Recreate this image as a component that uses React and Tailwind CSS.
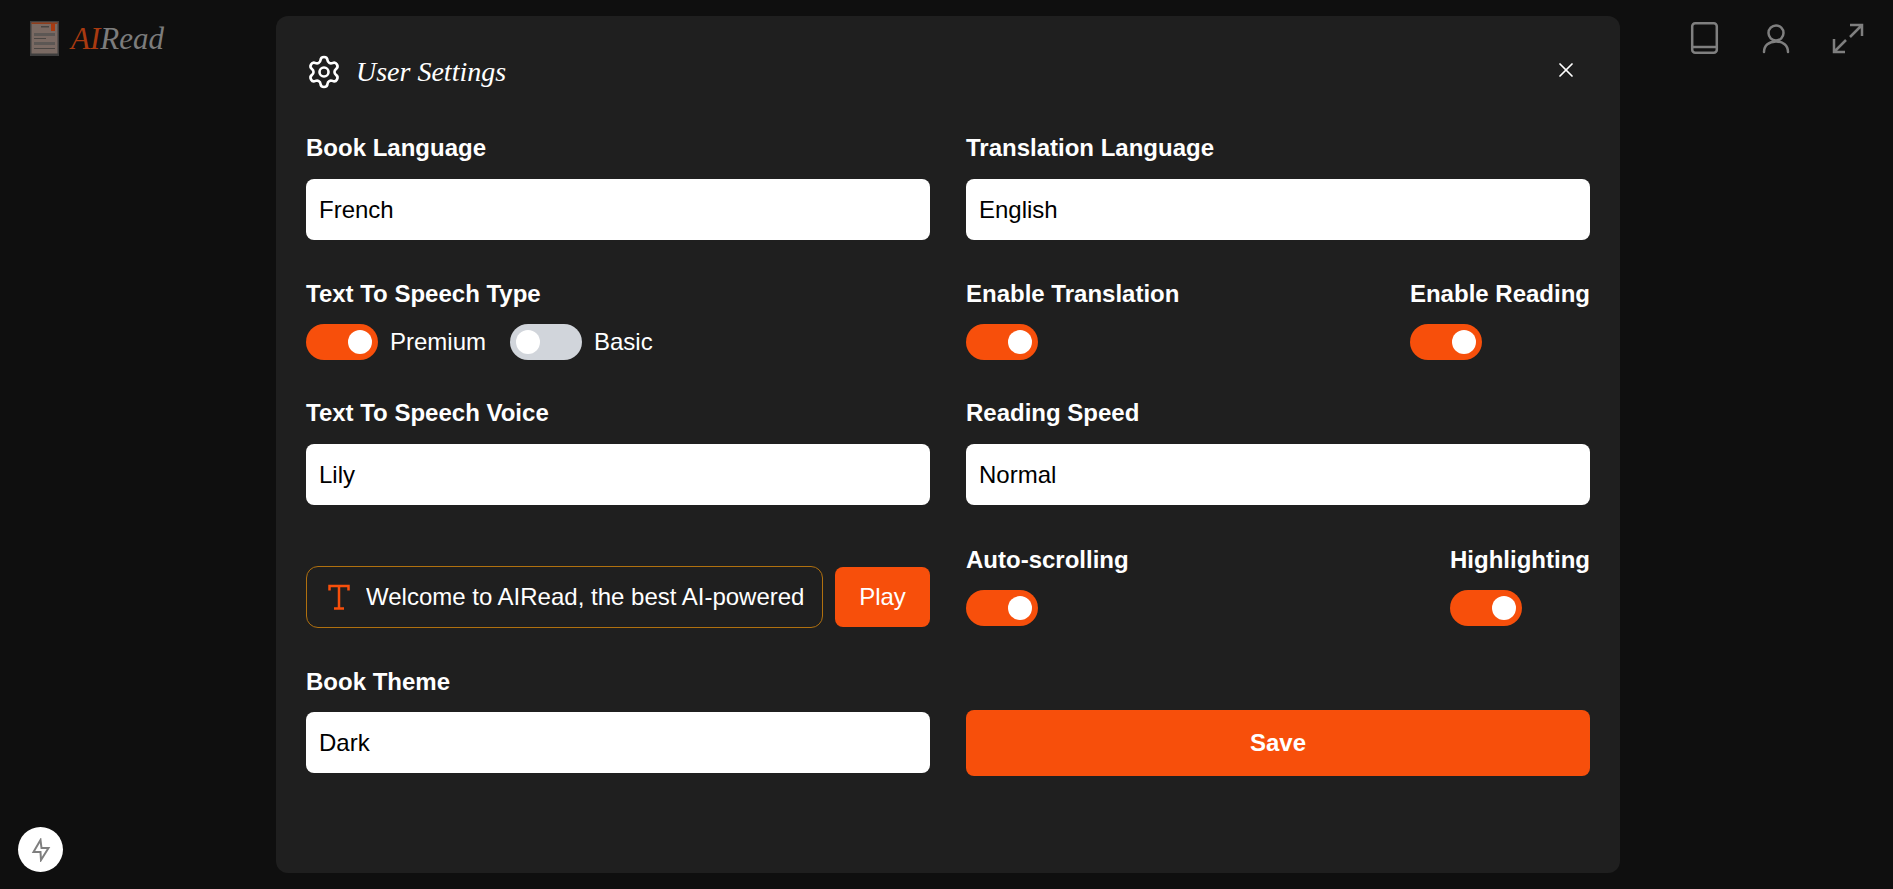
import { Settings, X } from "lucide-react";

const sans = "font-['Liberation_Sans',Arial,sans-serif]";
const script = "font-['Liberation_Serif',cursive] italic";

function Toggle({ on = true }) {
  return (
    <div className={`w-[72px] h-9 rounded-full flex items-center px-[6px] ${on ? "bg-[#f74f0b] justify-end" : "bg-[#d1d5db] justify-start"}`}>
      <div className="w-6 h-6 rounded-full bg-white" />
    </div>
  );
}

function Field({ value }) {
  return (
    <div className="h-[61px] rounded-lg bg-white flex items-center px-[13px] text-[24px] text-black">{value}</div>
  );
}

function Label({ children }) {
  return <div className="text-[24px] leading-8 font-bold text-white whitespace-nowrap">{children}</div>;
}

function ToggleCol({ label }) {
  return (
    <div className="flex flex-col gap-[14px]">
      <Label>{label}</Label>
      <Toggle />
    </div>
  );
}

function LogoMark() {
  return (
    <svg width="29" height="35" viewBox="0 0 29 35">
      <rect width="29" height="35" fill="#3e3e3e" />
      <rect x="1.5" y="1.5" width="26" height="31" fill="#7a6a63" />
      <rect x="1.5" y="1.5" width="26" height="1.5" fill="#8f3d1b" />
      <rect x="21" y="3" width="4" height="7" fill="#a93a10" />
      <rect x="11" y="5" width="8" height="1.5" fill="#4a4643" />
      <rect x="4" y="12" width="21" height="3" fill="#5c5754" />
      <rect x="4" y="17" width="12" height="1" fill="#4a4643" />
      <rect x="4" y="21" width="21" height="3" fill="#5c5754" />
      <rect x="4" y="27" width="21" height="1" fill="#4a4643" />
    </svg>
  );
}

function BookIcon() {
  return (
    <svg width="36" height="36" viewBox="0 0 36 36" fill="none" stroke="currentColor" strokeWidth="2.5" strokeLinejoin="round">
      <rect x="6.2" y="3.2" width="24.6" height="29.6" rx="3" />
      <path d="M6.2 27h24.6" />
    </svg>
  );
}

function UserIcon() {
  return (
    <svg width="36" height="36" viewBox="0 0 36 36" fill="none" stroke="currentColor" strokeWidth="2.5" strokeLinecap="round">
      <circle cx="18" cy="13" r="7.5" />
      <path d="M6 32c0-6.5 5-10.5 12-10.5s12 4 12 10.5" />
    </svg>
  );
}

function ExpandIcon() {
  return (
    <svg width="36" height="36" viewBox="0 0 36 36" fill="none" stroke="currentColor" strokeWidth="2.5">
      <path d="M20 5h12v11M32 5 20 17" />
      <path d="M4 19v13h11M4 32l12-12" />
    </svg>
  );
}

function BoltIcon() {
  return (
    <svg width="24" height="24" viewBox="0 0 24 24" fill="none" stroke="currentColor" strokeWidth="2">
      <path d="M11.5 2 4.5 14h7l.5 8 7.5-12h-7z" />
    </svg>
  );
}

function SerifT() {
  return (
    <svg width="22" height="26" viewBox="0 0 22 26" fill="none" stroke="#f74f0b" strokeWidth="2.5" className="shrink-0">
      <path d="M1.5 6.5V2h19v4.5M11 2v22.5M6 24.5h10" />
    </svg>
  );
}

export default function App() {
  return (
    <div className={`relative h-[889px] overflow-hidden bg-[#0f0f0f] ${sans}`}>
      <header className="h-[76px] flex items-center justify-between pl-[30px] pr-[27px]">
        <div className="flex items-center gap-[12px]">
          <LogoMark />
          <div className={`${script} text-[31px] leading-none`}>
            <span className="text-[#a93a10]">AI</span>
            <span className="text-[#7c7c7c]">Read</span>
          </div>
        </div>
        <div className="flex items-center gap-[36px] text-[#7f7f7f]">
          <BookIcon />
          <UserIcon />
          <ExpandIcon />
        </div>
      </header>

      <button className="absolute left-[18px] top-[827px] w-[45px] h-[45px] rounded-full bg-white flex items-center justify-center text-[#7f7f7f]">
        <BoltIcon />
      </button>

      <div className="absolute left-[276px] top-[16px] w-[1344px] h-[857px] rounded-xl bg-[#1f1f1f] px-[30px] pt-[36px]">
        <div className="h-[40px] flex items-center justify-between text-white">
          <div className="flex items-center gap-[14px]">
            <Settings size={36} strokeWidth={1.75} />
            <span className={`${script} text-[28px] leading-none`}>User Settings</span>
          </div>
          <X size={24} className="mr-[12px] -mt-[4px]" strokeWidth={1.75} />
        </div>

        <div className="mt-[40px] grid grid-cols-2 gap-x-9">
          <div className="flex flex-col">
            <Label>Book Language</Label>
            <div className="mt-[15px]"><Field value="French" /></div>

            <div className="mt-[38px]"><Label>Text To Speech Type</Label></div>
            <div className="mt-[14px] flex items-center text-[24px] text-white">
              <Toggle />
              <span className="ml-3">Premium</span>
              <div className="ml-6"><Toggle on={false} /></div>
              <span className="ml-3">Basic</span>
            </div>

            <div className="mt-[37px]"><Label>Text To Speech Voice</Label></div>
            <div className="mt-[15px]"><Field value="Lily" /></div>

            <div className="mt-[61px] flex items-center gap-3">
              <div className="flex-1 min-w-0 h-[62px] rounded-xl border border-[#b0700f] flex items-center pl-[21px] pr-2 gap-[16px] text-[24px] text-white">
                <SerifT />
                <span className="overflow-hidden whitespace-nowrap">Welcome to AIRead, the best AI-powered</span>
              </div>
              <button className="w-[95px] h-[60px] rounded-lg bg-[#f74f0b] text-[24px] text-white">Play</button>
            </div>

            <div className="mt-[38px]"><Label>Book Theme</Label></div>
            <div className="mt-[14px]"><Field value="Dark" /></div>
          </div>

          <div className="flex flex-col">
            <Label>Translation Language</Label>
            <div className="mt-[15px]"><Field value="English" /></div>

            <div className="mt-[38px] flex justify-between">
              <ToggleCol label="Enable Translation" />
              <ToggleCol label="Enable Reading" />
            </div>

            <div className="mt-[37px]"><Label>Reading Speed</Label></div>
            <div className="mt-[15px]"><Field value="Normal" /></div>

            <div className="mt-[39px] flex justify-between">
              <ToggleCol label="Auto-scrolling" />
              <ToggleCol label="Highlighting" />
            </div>

            <button className="mt-[84px] h-[66px] rounded-lg bg-[#f74f0b] text-[24px] font-bold text-white">Save</button>
          </div>
        </div>
      </div>
    </div>
  );
}
